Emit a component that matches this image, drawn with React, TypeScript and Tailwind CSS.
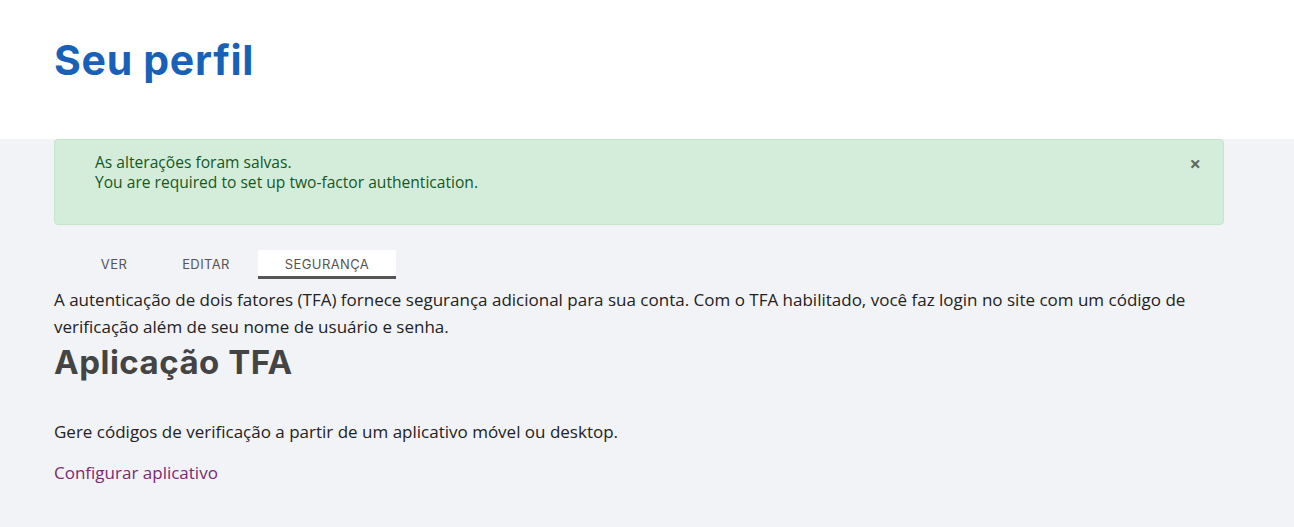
export default function App() {
  return (
    <div className="min-h-[527px] bg-[#f2f3f7] font-['Open_Sans',sans-serif] text-[#222]">
      <header className="bg-white h-[139px] px-[54px] pt-[34px]">
        <h1 className="font-['Inter',sans-serif] text-[41px] leading-[52px] font-bold text-[#1761b8] tracking-[0.7px]">
          Seu perfil
        </h1>
      </header>

      <main className="px-[54px] pr-[70px]">
        <div className="relative h-[86px] rounded border border-[#c3e6cb] bg-[#d4edda] pl-[40px] pt-[12px] text-[15.6px] leading-[20px] text-[#155724]">
          <p>As alterações foram salvas.</p>
          <p>You are required to set up two-factor authentication.</p>
          <button className="absolute right-[22px] top-[14px] text-[20px] font-bold leading-5 text-[#5f6b60]">
            ×
          </button>
        </div>

        <nav className="mt-[25px] flex pl-[11px] font-['Inter',sans-serif] text-[13px] uppercase tracking-[0.4px] text-[#555]">
          <a className="w-[98px] text-center h-[29px] leading-[28px]">Ver</a>
          <a className="w-[86px] text-center h-[29px] leading-[28px]">Editar</a>
          <a className="ml-[9px] w-[138px] text-center h-[29px] leading-[28px] bg-white border-b-[3px] border-[#555]">
            Segurança
          </a>
        </nav>

        <p className="mt-[7px] text-[17px] leading-[27px]">
          A autenticação de dois fatores (TFA) fornece segurança adicional para sua conta. Com o TFA habilitado, você faz login no site com um código de verificação além de seu nome de usuário e senha.
        </p>

        <h2 className="font-['Inter',sans-serif] text-[33px] leading-[44px] font-bold tracking-[0.5px] text-[#444]">
          Aplicação TFA
        </h2>

        <p className="mt-[34px] text-[17px] leading-[27px]">
          Gere códigos de verificação a partir de um aplicativo móvel ou desktop.
        </p>

        <a className="mt-[14px] block text-[17px] leading-[27px] text-[#7b2a74]">
          Configurar aplicativo
        </a>
      </main>
    </div>
  );
}
